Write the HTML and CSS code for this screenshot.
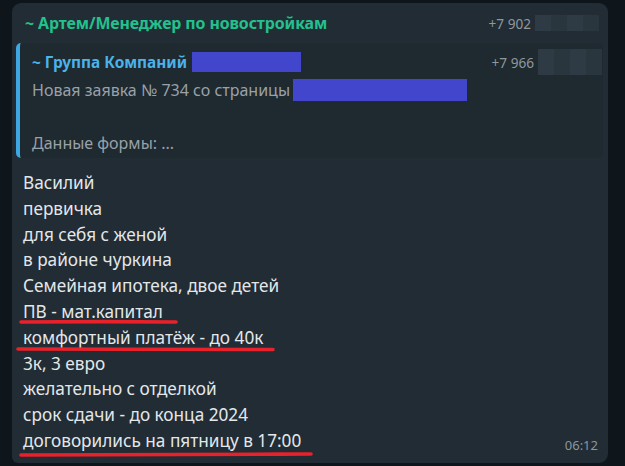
FILE: index.html
```html
<!DOCTYPE html>
<html lang="ru">
<head>
<meta charset="utf-8">
<link rel="stylesheet" href="styles.css">
</head>
<body>
<div class="bubble">
  <div class="head">
    <span class="author">~ Артем/Менеджер по новостройкам</span>
    <span class="phone">+7 902 <span class="blur"><i></i><i></i><i></i><i></i></span></span>
  </div>
  <div class="quote">
    <div class="qhead">
      <span class="qtitle">~ Группа Компаний <span class="redact r1"></span></span>
      <span class="phone">+7 966 <span class="blur tall"><i></i><i></i><i></i><i></i></span></span>
    </div>
    <div class="qline">Новая заявка № 734 со страницы <span class="redact r2"></span></div>
    <div class="qline">&nbsp;</div>
    <div class="qline">Данные формы: ...</div>
  </div>
  <div class="body">
    <div class="line">Василий</div>
    <div class="line">первичка</div>
    <div class="line">для себя с женой</div>
    <div class="line">в районе чуркина</div>
    <div class="line">Семейная ипотека, двое детей</div>
    <div class="line">ПВ - мат.капитал</div>
    <div class="line">комфортный платёж - до 40к</div>
    <div class="line">3к, 3 евро</div>
    <div class="line">желательно с отделкой</div>
    <div class="line">срок сдачи - до конца 2024</div>
    <div class="line last">договорились на пятницу в 17:00 <span class="time">06:12</span></div>
  </div>
  <svg class="marks" width="596" height="460" viewBox="0 0 596 460">
    <path d="M9 319 C60 318.5 120 318.5 164 319" stroke="#e8212b" stroke-width="3.6" fill="none" stroke-linecap="round"/>
    <path d="M6 346 C90 346.5 180 346 261 346.5" stroke="#e8212b" stroke-width="3.6" fill="none" stroke-linecap="round"/>
    <path d="M9 452 C100 451 200 451.5 299 451" stroke="#e8212b" stroke-width="3.6" fill="none" stroke-linecap="round"/>
  </svg>
</div>
</body>
</html>
```
FILE: styles.css
```css
html, body {
  margin: 0;
  padding: 0;
}
body {
  width: 625px;
  height: 466px;
  overflow: hidden;
  background: #0e151b;
  font-family: "Noto Sans", "Open Sans", sans-serif;
  padding-top: 3px;
  padding-left: 12px;
  box-sizing: border-box;
}
.bubble {
  position: relative;
  width: 596px;
  height: 460px;
  background: #212c35;
  border-radius: 9px 9px 9px 6px;
  box-sizing: border-box;
  padding: 0 5px 0 4px;
  display: flex;
  flex-direction: column;
}
.head {
  height: 40px;
  display: flex;
  align-items: center;
  justify-content: space-between;
  padding-left: 9px;
  margin-right: 4px;
}
.author {
  color: #22c18e;
  font-weight: 700;
  font-size: 15.9px;
  letter-spacing: -0.1px;
}
.phone {
  color: #8f989f;
  font-size: 13.6px;
  display: flex;
  align-items: center;
  gap: 4px;
}
.blur {
  display: grid;
  grid-template-columns: repeat(4, 16px);
  width: 64px;
  height: 16px;
  background: #2c3841;
}
.blur i:nth-child(odd) { background: #2f3b44; }
.blur i:nth-child(even) { background: #2a363e; }
.blur.tall { height: 26px; }
.quote {
  height: 115px;
  background: #1e2930;
  border-left: 4px solid #3ea8e4;
  border-radius: 5px;
  padding-left: 12px;
  padding-right: 0;
  box-sizing: border-box;
  padding-top: 4px;
}
.qhead {
  height: 30px;
  display: flex;
  align-items: center;
  justify-content: space-between;
  margin-right: 1px;
}
.qtitle {
  color: #4cb2ea;
  font-weight: 700;
  font-size: 15.4px;
  display: flex;
  align-items: center;
  gap: 5px;
}
.redact {
  display: inline-block;
  background: #4146cc;
  vertical-align: middle;
}
.r1 { width: 109px; height: 20px; }
.r2 { width: 174px; height: 22px; }
.qline {
  color: #9aa1a8;
  font-size: 16px;
  height: 26.5px;
  line-height: 26.5px;
  display: flex;
  align-items: center;
  gap: 3px;
}
.body {
  padding-left: 7px;
  padding-top: 12px;
  color: #e4e7ea;
  font-size: 17.2px;
}
.line {
  height: 25.8px;
  line-height: 25.8px;
}
.last {
  display: flex;
  justify-content: space-between;
  align-items: baseline;
}
.time {
  color: #8c969e;
  font-size: 13px;
  margin-right: 5px;
  position: relative;
  top: 3px;
}
.marks {
  position: absolute;
  left: 0;
  top: 0;
  pointer-events: none;
}
```
